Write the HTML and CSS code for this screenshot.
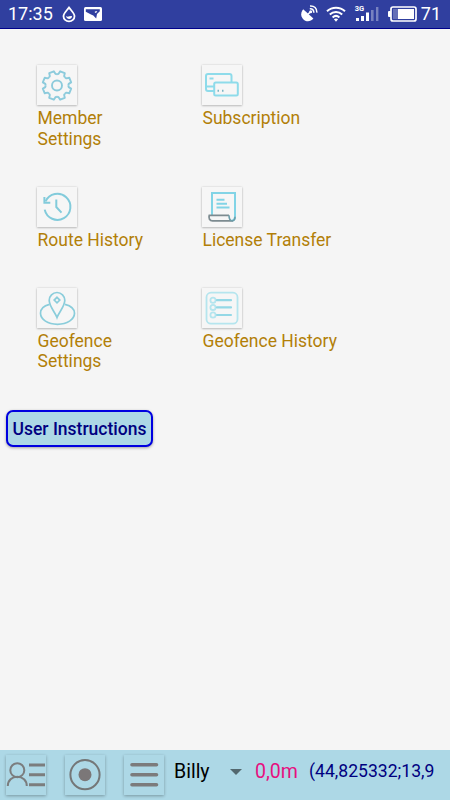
FILE: index.html
```html
<!DOCTYPE html>
<html lang="en">
<head>
    <meta charset="UTF-8">
    <meta name="viewport" content="width=device-width, initial-scale=1.0">
    <title>Menu</title>
    <link rel="stylesheet" href="styles.css">
</head>
<body>

    <header class="status-bar">
        <span class="clock">17:35</span>
        <svg class="drop" width="14" height="18" viewBox="0 0 14 18" fill="none" stroke="#fff" stroke-width="1.8">
            <path d="M7 2.5C5 5.5 1.5 8 1.5 11.2a5.5 5.2 0 0 0 11 0C12.5 8 9 5.5 7 2.5Z"/>
            <path d="M4 11c1.8 1.6 4-.4 6 .2-.2 3.6-5.4 3.6-6-.2Z" fill="#fff" stroke="none"/>
        </svg>
        <svg class="picture" width="18" height="14" viewBox="0 0 18 14">
            <rect width="18" height="14" rx="1.5" fill="#fff"/>
            <path d="M1.8 2.3H15.8V4.2L13 7l-.8 4.6L9.3 8.4 7 7.4 1.8 4.8Z" fill="#303f9f"/>
            <path d="m10.5 4.9 1.6-1 1.2.9-1.6 1.3Z" fill="#fff"/>
        </svg>
        <span class="spacer"></span>
        <svg class="satellite" width="17" height="17" viewBox="0 0 17 17">
            <path d="M2.2 4.2 12.4 13.6C9.3 17.2 4.6 17 2 14S-.2 7 2.2 4.2Z" fill="#fff"/>
            <path d="m7 9.3 3-3" stroke="#fff" stroke-width="1.6"/>
            <circle cx="9.7" cy="6.8" r="1.5" fill="#fff"/>
            <path d="M8.8 3.7c2.5-.3 4.2 1.4 4 4M9 .9c4.3-.3 7 2.4 6.8 6.7" fill="none" stroke="#fff" stroke-width="1.5"/>
        </svg>
        <svg class="wifi" width="20" height="16" viewBox="0 0 20 16" fill="none" stroke="#fff" stroke-width="2">
            <path d="M1 5.3c5-4.7 13-4.7 18 0M3.8 8.4c3.5-3.3 8.9-3.3 12.4 0M6.6 11.4c2-1.8 4.8-1.8 6.8 0"/>
            <path d="m7.9 13.3 2.1 2.4 2.1-2.4c-1.2-1-3-1-4.2 0Z" fill="#fff" stroke="none"/>
        </svg>
        <div class="signal">
            <span class="network">3G</span>
            <svg width="24" height="15" viewBox="0 0 24 15" fill="#fff">
                <path d="M1 12h3v3H1zM6 10h3v5H6zM11 6.5h3V15h-3z"/>
                <path d="M16 4h2.6v11H16zM21 1h2.4v14H21z" opacity=".35"/>
            </svg>
        </div>
        <svg class="battery" width="29" height="16" viewBox="0 0 29 16">
            <rect x="3" y="1" width="25" height="14" rx="2" fill="none" stroke="#fff" stroke-width="1.7"/>
            <rect y="5" width="3" height="6" rx="1" fill="#fff"/>
            <rect x="5" y="3" width="5" height="10" fill="#fff" opacity=".25"/>
            <rect x="10" y="3" width="16" height="10" fill="#fff"/>
        </svg>
        <span class="percent">71</span>
    </header>

    <main class="content">
        <div class="menu">
            <a class="menu-item">
                <span class="tile">
                    <svg width="40" height="40" viewBox="0 0 40 40">
                        <defs>
                            <path id="tooth" d="M-4.3-10.4-3-11.4-2.5-14.3H2.5L3-11.4 4.3-10.4"/>
                        </defs>
                        <g transform="translate(20 20.5)" fill="none" stroke="#8ccbdc" stroke-width="1.9" stroke-linejoin="round">
                            <use href="#tooth" transform="rotate(22.5)"/>
                            <use href="#tooth" transform="rotate(67.5)"/>
                            <use href="#tooth" transform="rotate(112.5)"/>
                            <use href="#tooth" transform="rotate(157.5)"/>
                            <use href="#tooth" transform="rotate(202.5)"/>
                            <use href="#tooth" transform="rotate(247.5)"/>
                            <use href="#tooth" transform="rotate(292.5)"/>
                            <use href="#tooth" transform="rotate(337.5)"/>
                            <circle r="5"/>
                        </g>
                    </svg>
                </span>
                <span class="label">Member Settings</span>
            </a>
            <a class="menu-item">
                <span class="tile">
                    <svg width="40" height="40" viewBox="0 0 40 40" fill="none" stroke="#8edbea" stroke-width="2">
                        <path d="M29.5 17v-6a2 2 0 0 0-2-2H6a2 2 0 0 0-2 2v13a2 2 0 0 0 2 2h6M4 21.5h8"/>
                        <rect x="12.2" y="17.5" width="23.6" height="13" rx="1.5"/>
                        <path d="M7.5 13.5h4"/>
                        <path d="M15.5 25.8H17M20 25.8h1.5" stroke="#7bb5c3"/>
                    </svg>
                </span>
                <span class="label">Subscription</span>
            </a>
            <a class="menu-item">
                <span class="tile">
                    <svg width="40" height="40" viewBox="0 0 40 40" fill="none" stroke="#82cbdb" stroke-width="2">
                        <path d="M8.6 14.4A13 13 0 1 1 7.7 22.6"/>
                        <path d="M7.4 10v5.7h5.9M19.3 12.5V20l5.2 5.6"/>
                    </svg>
                </span>
                <span class="label">Route History</span>
            </a>
            <a class="menu-item">
                <span class="tile">
                    <svg width="40" height="40" viewBox="0 0 40 40" fill="none" stroke="#82d4e6" stroke-width="2">
                        <path d="M10 28V6h23v24c0 2-1 3-2.5 3.5"/>
                        <path d="M14.5 12.8h8M14.5 16.7h10.5M14.5 20.5h13"/>
                        <path d="M27 28.3H7.3c-1 3 .5 5.5 3.2 5.5H31" stroke="#7d8b90" stroke-width="1.8"/>
                        <path d="M27 28.3c0 3.7 1.6 5.5 3.3 5.5 1.8 0 2.7-1.4 2.7-4" stroke="#6b9eaa" stroke-width="1.6"/>
                    </svg>
                </span>
                <span class="label">License Transfer</span>
            </a>
            <a class="menu-item">
                <span class="tile">
                    <svg width="40" height="40" viewBox="0 0 40 40" fill="none" stroke="#8acddb" stroke-width="1.7">
                        <path d="M12.5 16.4C7 17.8 3.5 21 3.5 25.3c0 6.2 7.5 11 17 11s17-4.8 17-11c0-4.3-4-7.5-9.5-8.9"/>
                        <path d="M20 29.5C18 24 12.2 18.5 12.2 12.3a7.8 7.8 0 0 1 15.6 0C27.8 18.5 22 24 20 29.5Z"/>
                        <path d="m20 9.3 2.8 2.8L20 14.9l-2.8-2.8Z"/>
                    </svg>
                </span>
                <span class="label">Geofence Settings</span>
            </a>
            <a class="menu-item">
                <span class="tile">
                    <svg width="40" height="40" viewBox="0 0 40 40" fill="none" stroke="#b5e5ee" stroke-width="1.8">
                        <rect x="4.5" y="4.7" width="31" height="31" rx="4.5"/>
                        <circle cx="11" cy="12.2" r="2.6"/>
                        <circle cx="11" cy="19.4" r="2.6"/>
                        <circle cx="11" cy="27" r="2.6"/>
                        <path d="M15 12.2h14M15 19.4h14M15 27h14" stroke="#94d8e6" stroke-width="2.2" stroke-linecap="round"/>
                    </svg>
                </span>
                <span class="label">Geofence History</span>
            </a>
        </div>
        <button class="instructions">User Instructions</button>
    </main>

    <footer class="bottom-bar">
        <button class="bar-button">
            <svg width="40" height="40" viewBox="0 0 40 40" fill="none" stroke="#7b7d7e" stroke-width="2">
                <circle cx="11.3" cy="15.2" r="7"/>
                <path d="M1.8 31c0-5.4 4.2-9.3 9.5-9.3s9.5 3.9 9.5 9.3"/>
                <path d="M23 10h16M23 19.8h16M23 29.8h16" stroke-width="3"/>
            </svg>
        </button>
        <button class="bar-button">
            <svg width="40" height="40" viewBox="0 0 40 40">
                <circle cx="20" cy="19.7" r="14.6" fill="none" stroke="#747778" stroke-width="2"/>
                <circle cx="20" cy="19.7" r="6.5" fill="#7b7778"/>
            </svg>
        </button>
        <button class="bar-button">
            <svg width="40" height="40" viewBox="0 0 40 40" stroke="#7b7b7c" stroke-width="3.6" stroke-linecap="round">
                <path d="M8 9.7h24.5M8 19.7h24.5M8 29.7h24.5"/>
            </svg>
        </button>
        <div class="select">
            <span>Billy</span>
            <span class="arrow"></span>
        </div>
        <span class="distance">0,0m</span>
        <span class="position">(44,825332;13,9</span>
    </footer>

</body>
</html>
```

FILE: styles.css
```css
* {
    box-sizing: border-box;
}
body {
    margin: 0;
    height: 800px;
    display: flex;
    flex-direction: column;
    overflow: hidden;
    font-family: Roboto, sans-serif;
    background-color: #f5f5f5;
}
svg {
    display: block;
    flex: none;
}
button {
    font-family: inherit;
    padding: 0;
    border: none;
}
.status-bar {
    height: 29px;
    flex: none;
    display: flex;
    align-items: center;
    padding: 0 9px 1px 8px;
    background-color: #303f9f;
    border-bottom: 1px solid #00008b;
    color: white;
    font-size: 18px;
}
.clock {
    width: 54px;
}
.picture {
    margin-left: 8px;
}
.spacer {
    flex: 1;
}
.wifi {
    margin-left: 8px;
}
.signal {
    position: relative;
    margin-left: 9px;
}
.network {
    position: absolute;
    left: 0;
    top: -1px;
    font-size: 7.5px;
    line-height: 7px;
    font-weight: bold;
}
.battery {
    margin: 0 4px 0 9px;
}
.content {
    flex: 1;
    padding: 36px 6px 0;
}
.menu {
    display: grid;
    grid-template-columns: 165px 165px;
    row-gap: 37.5px;
    padding-left: 31px;
}
.tile {
    display: block;
    width: 40px;
    height: 40px;
    background-color: #f6f6f6;
    box-shadow: 0 1px 2px rgba(0, 0, 0, 0.2), 0 0 2px rgba(0, 0, 0, 0.15);
}
.label {
    display: block;
    width: 140px;
    margin-top: 3px;
    padding-left: 0.5px;
    color: #b27f08;
    font-size: 17.5px;
    line-height: 20.6px;
}
.menu-item:nth-child(odd) .label {
    width: 125px;
}
.instructions {
    display: block;
    width: 147px;
    height: 37px;
    margin-top: 38px;
    border: 2px solid #0000e0;
    border-radius: 7px;
    background-color: #add8e6;
    box-shadow: 0 1px 3px rgba(0, 0, 0, 0.35);
    color: #000080;
    font-size: 17.5px;
    font-weight: 500;
    line-height: 34px;
    white-space: nowrap;
}
.bottom-bar {
    height: 50px;
    flex: none;
    display: flex;
    align-items: flex-start;
    padding: 5px 0 0 6px;
    background-color: #add8e6;
    white-space: nowrap;
}
.bar-button {
    width: 40px;
    height: 40px;
    flex: none;
    margin-right: 19px;
    background-color: #add8e6;
    box-shadow: 0 1px 3px rgba(0, 0, 0, 0.3);
}
.select {
    display: flex;
    align-items: center;
    justify-content: space-between;
    width: 68px;
    margin-left: -9px;
    font-size: 19.5px;
    line-height: 33px;
}
.arrow {
    border: 6px solid transparent;
    border-top-color: #53686f;
    border-bottom: none;
}
.distance {
    width: 54px;
    margin-left: 13px;
    color: #e6107f;
    font-size: 19.5px;
    line-height: 33px;
}
.position {
    color: #000080;
    font-size: 17.6px;
    line-height: 32px;
}
```
